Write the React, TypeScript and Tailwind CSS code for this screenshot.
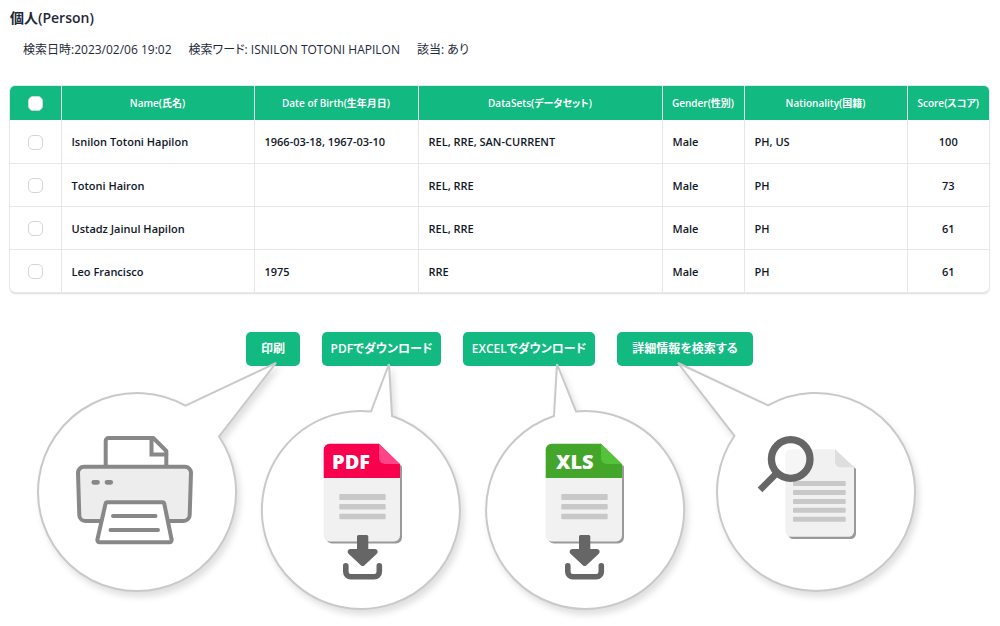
import { useState } from 'react';
import type { ReactNode } from 'react';

type Person = {
  id: number;
  name: string;
  birth: string;
  datasets: string;
  gender: string;
  nationality: string;
  score: number;
};

const people: Person[] = [
  { id: 1, name: 'Isnilon Totoni Hapilon', birth: '1966-03-18, 1967-03-10', datasets: 'REL, RRE, SAN-CURRENT', gender: 'Male', nationality: 'PH, US', score: 100 },
  { id: 2, name: 'Totoni Hairon', birth: '', datasets: 'REL, RRE', gender: 'Male', nationality: 'PH', score: 73 },
  { id: 3, name: 'Ustadz Jainul Hapilon', birth: '', datasets: 'REL, RRE', gender: 'Male', nationality: 'PH', score: 61 },
  { id: 4, name: 'Leo Francisco', birth: '1975', datasets: 'RRE', gender: 'Male', nationality: 'PH', score: 61 },
];

const columns = [
  { label: 'Name(氏名)', width: 'w-[193px]' },
  { label: 'Date of Birth(生年月日)', width: 'w-[164px]' },
  { label: 'DataSets(データセット)', width: 'w-[244px]' },
  { label: 'Gender(性別)', width: 'w-[82px]' },
  { label: 'Nationality(国籍)', width: 'w-[163px]' },
  { label: 'Score(スコア)', width: 'w-[82px]' },
];

const actions = [
  { label: '印刷', width: 'w-[54px]' },
  { label: 'PDFでダウンロード', width: 'w-[119px]' },
  { label: 'EXCELでダウンロード', width: 'w-[132px]' },
  { label: '詳細情報を検索する', width: 'w-[136px]' },
];

const checkboxClass =
  'block mx-auto size-[15px] appearance-none rounded-[5px] border border-gray-300 bg-white checked:border-emerald-700 checked:bg-emerald-300';

const cellClass = 'border-l border-gray-200 px-[10px] pt-0.5';

function Bubble({ outline, className, children }: { outline: string; className?: string; children: ReactNode }) {
  return (
    <svg viewBox="0 0 200 200" className={`size-[200px] shrink-0 overflow-visible ${className ?? ''}`} aria-hidden="true">
      <path
        d={outline}
        fill="#fff"
        stroke="#c9c9c9"
        strokeWidth="2"
        strokeLinejoin="miter"
        className="drop-shadow-[3px_5px_3px_rgba(0,0,0,0.12)]"
      />
      {children}
    </svg>
  );
}

function PrinterIcon() {
  return (
    <g fill="none" stroke="#888" strokeWidth="4" strokeLinejoin="round" strokeLinecap="round">
      <path d="M68.7 75V49a3 3 0 0 1 3-3h44.6l13 13v16" />
      <path d="M114.5 46.5v16h14.8" strokeLinejoin="miter" />
      <path d="M47 74.7h101a6 6 0 0 1 6 6.2l-1.3 42a6 6 0 0 1-6 6H48.3a6 6 0 0 1-6-6l-1.3-42a6 6 0 0 1 6-6.2Z" fill="#ededed" />
      <path d="M56.8 90.3h3.7M70 90.3h3.7" strokeWidth="4.8" />
      <path d="M70.5 110.3h54.8a2 2 0 0 1 2 1.6l7.3 35.6a2.3 2.3 0 0 1-2.2 2.8H62.6a2.3 2.3 0 0 1-2.2-2.8l8.1-35.6a2 2 0 0 1 2-1.6Z" fill="#fff" />
      <path d="M76 124h42.5M73.5 138h47.5" />
    </g>
  );
}

function FileIcon({ label, labelX, color, fold }: { label: string; labelX: number; color: string; fold: string }) {
  return (
    <g>
      <path d="M70 36h50l21 20.5v71a6 6 0 0 1-6 6H71a6 6 0 0 1-6-6V42Z" fill="#999" />
      <path d="M62.7 60H139v65.5a6 6 0 0 1-6 6H68.7a6 6 0 0 1-6-6Z" fill="#f1f1f1" />
      <path d="M62.7 68V39.7a6 6 0 0 1 6-6H118L139 54.5V68Z" fill={color} />
      <path d="M118 33.7 139 54h-15a6 6 0 0 1-6-6Z" fill={fold} />
      <text x={labelX} y="59" fill="#fff" className="font-['Open_Sans',sans-serif] text-[20px] font-extrabold">
        {label}
      </text>
      <g fill="#c8c8c8">
        <rect x="78.3" y="84" width="46.4" height="6" rx="1" />
        <rect x="78.3" y="94" width="46.4" height="5.5" rx="1" />
        <rect x="78.3" y="103.7" width="46.4" height="5.6" rx="1" />
      </g>
      <path
        d="M97.5 125h8.3a1.5 1.5 0 0 1 1.5 1.5V139h6.7a2.7 2.7 0 0 1 1.8 4.7l-12.3 11.5a2.7 2.7 0 0 1-3.7 0l-12.3-11.5A2.7 2.7 0 0 1 89.3 139H96v-12.5a1.5 1.5 0 0 1 1.5-1.5Z"
        fill="#666"
      />
      <path d="M84.8 155.800v6a5 5 0 0 0 5 5h23.500a5 5 0 0 0 5-5v-6" fill="none" stroke="#666" strokeWidth="5.6" strokeLinecap="round" />
    </g>
  );
}

function SearchFileIcon() {
  return (
    <g>
      <path d="M76 60h45l19 17v64.5a5.5 5.5 0 0 1-5.5 5.5h-57a5.5 5.5 0 0 1-5.5-5.5Z" fill="#999" />
      <path d="M74.8 57.3H119L138 75.3v64a5.5 5.5 0 0 1-5.5 5.5H74.8a5.5 5.5 0 0 1-5.5-5.5V62.8a5.5 5.5 0 0 1 5.5-5.5Z" fill="#f1f1f1" />
      <path d="M119 57.3 138 75.3h-13.5a5.5 5.5 0 0 1-5.5-5.5Z" fill="#dedede" />
      <g fill="#c8c8c8">
        <rect x="77" y="89" width="52.7" height="5" rx="1" />
        <rect x="77" y="98" width="52.7" height="5" rx="1" />
        <rect x="77" y="107" width="52.7" height="5" rx="1" />
        <rect x="77" y="115.7" width="52.7" height="5" rx="1" />
        <rect x="77" y="124.7" width="52.7" height="5" rx="1" />
      </g>
      <path d="M60.5 81.3 44 97.8" stroke="#666" strokeWidth="6.6" />
      <circle cx="74.7" cy="67" r="19.3" fill="#fff" fillOpacity="0.35" stroke="#666" strokeWidth="7.3" />
    </g>
  );
}

export default function App() {
  const [selected, setSelected] = useState<number[]>([]);
  const allSelected = selected.length === people.length;

  const toggleAll = () => setSelected(allSelected ? [] : people.map((p) => p.id));

  const toggle = (id: number) => {
    setSelected((prev) => (prev.includes(id) ? prev.filter((x) => x !== id) : [...prev, id]));
  };

  return (
    <main className="min-h-screen overflow-x-hidden bg-white pt-2 pr-[11px] pb-4 pl-[10px] font-['Open_Sans','Noto_Sans_CJK_JP',sans-serif] text-gray-800 [font-feature-settings:'palt']">
      <h1 className="text-[14px] leading-5 font-semibold">個人(Person)</h1>
      <div className="mt-3 flex flex-wrap gap-x-[17px] pl-[13px] text-[12px] leading-5">
        <span>検索日時:2023/02/06 19:02</span>
        <span>検索ワード: ISNILON TOTONI HAPILON</span>
        <span>該当: あり</span>
      </div>

      <div className="mt-[26px] overflow-hidden rounded-[5px] shadow-[0_0_0_1px_#e5e7eb,0_2px_2px_rgba(0,0,0,0.14)]">
        <table className="w-full table-fixed border-collapse text-[11px] leading-4">
          <thead className="bg-[#12b981] text-[10px] text-white">
            <tr className="h-[34px]">
              <th className="w-[51px]">
                <input type="checkbox" aria-label="すべて選択" checked={allSelected} onChange={toggleAll} className={checkboxClass} />
              </th>
              {columns.map((col) => (
                <th key={col.label} scope="col" className={`${col.width} border-l border-gray-200 font-semibold whitespace-nowrap`}>
                  {col.label}
                </th>
              ))}
            </tr>
          </thead>
          <tbody className="font-semibold text-gray-900">
            {people.map((person) => (
              <tr key={person.id} className="h-[43px] border-t border-gray-200 first:border-t-0">
                <td className="pt-0.5">
                  <input
                    type="checkbox"
                    aria-label={person.name}
                    checked={selected.includes(person.id)}
                    onChange={() => toggle(person.id)}
                    className={checkboxClass}
                  />
                </td>
                <td className={cellClass}>{person.name}</td>
                <td className={cellClass}>{person.birth}</td>
                <td className={cellClass}>{person.datasets}</td>
                <td className={cellClass}>{person.gender}</td>
                <td className={cellClass}>{person.nationality}</td>
                <td className={`${cellClass} text-center`}>{person.score}</td>
              </tr>
            ))}
          </tbody>
        </table>
      </div>

      <div className="mt-10 flex flex-wrap justify-center gap-[22px]">
        {actions.map((action) => (
          <button
            key={action.label}
            type="button"
            className={`${action.width} h-[34px] rounded-[5px] bg-[#12b981] text-[12px] font-semibold whitespace-nowrap text-white hover:bg-emerald-600`}
          >
            {action.label}
          </button>
        ))}
      </div>

      <div className="mt-[26px] flex items-start justify-center gap-6 pr-[46px]">
        <Bubble outline="M148.5 13.7A99 99 0 1 0 182 44.5L239-29Z">
          <PrinterIcon />
        </Bubble>
        <Bubble outline="M110 1.5A99 99 0 1 0 131 6L128-46Z" className="mt-[18px]">
          <FileIcon label="PDF" labelX={71} color="#f8004e" fold="#ff4586" />
        </Bubble>
        <Bubble outline="M69 6A99 99 0 1 0 91 1.4L72-46Z" className="mt-[18px]">
          <g transform="translate(-2 0)">
            <FileIcon label="XLS" labelX={73} color="#43a52a" fold="#54c339" />
          </g>
        </Bubble>
        <Bubble outline="M18.5 43.8A99 99 0 1 0 52 13.4L-38-29Z" className="ml-[7px]">
          <SearchFileIcon />
        </Bubble>
      </div>
    </main>
  );
}
